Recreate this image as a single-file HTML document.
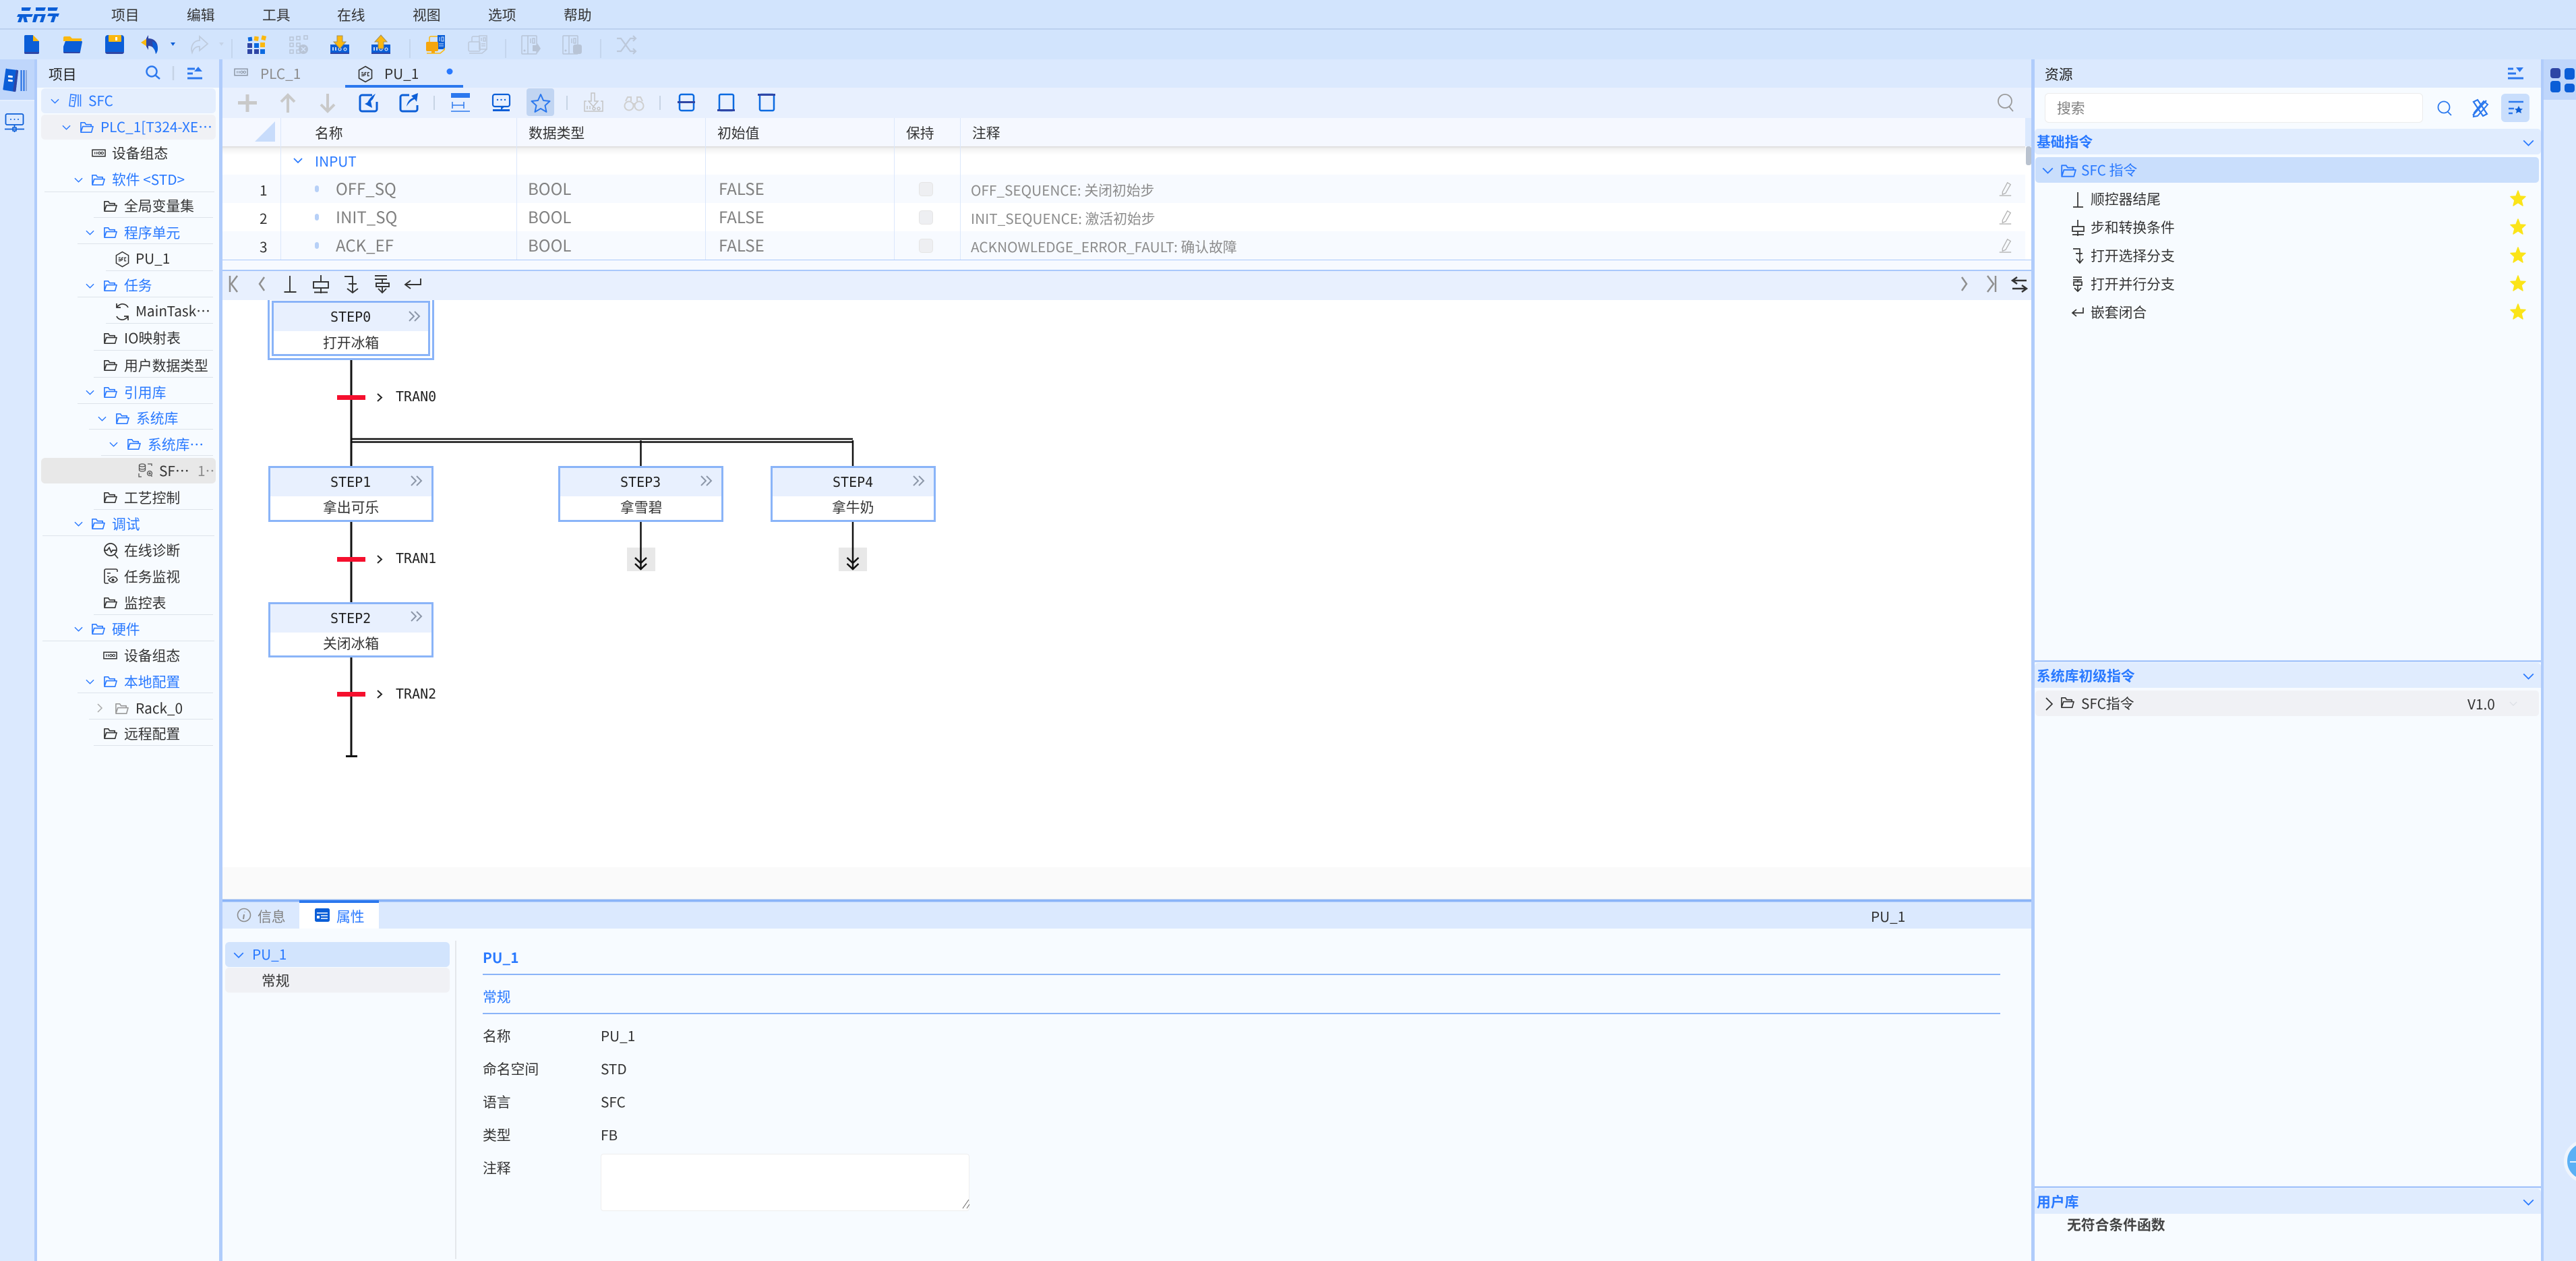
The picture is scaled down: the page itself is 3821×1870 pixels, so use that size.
<!DOCTYPE html>
<html lang="zh"><head><meta charset="utf-8"><title>SFC</title>
<style>
html,body{margin:0;padding:0;width:3821px;height:1870px;overflow:hidden;background:#dbe9fe}
body{position:relative;font-family:"Noto Sans CJK SC","Liberation Sans",sans-serif;font-size:20.8px;color:#333}
.b{position:absolute}
.t{position:absolute;white-space:nowrap;line-height:30px;height:30px;margin-top:-1px}
.bl{color:#2979ff}.g{color:#808080}.lg{color:#8c8c8c}.d{color:#333}
.h{font-weight:700;color:#2979ff}
.v{font-size:24px}
.m{font-family:"DejaVu Sans Mono","Liberation Mono",monospace;font-size:20px;color:#222}
svg.o{position:absolute;left:0;top:0}
</style></head><body>
<!-- backgrounds -->
<div class="b" style="left:0;top:0;width:3821px;height:88px;background:#d2e4fd"></div>
<div class="b" style="left:0;top:42px;width:3821px;height:2px;background:#bcd1ef"></div>
<div class="b" style="left:0;top:88px;width:52px;height:60px;background:#bfd6fb"></div>
<div class="b" style="left:0;top:148px;width:52px;height:2px;background:#e4eefe"></div>
<div class="b" style="left:51px;top:88px;width:4px;height:1782px;background:#b0ccfb"></div>
<div class="b" style="left:55px;top:130px;width:270px;height:1740px;background:#f7fbff"></div>
<div class="b" style="left:325px;top:88px;width:5px;height:1782px;background:#b0ccfb"></div>
<div class="b" style="left:61px;top:131px;width:259px;height:37px;background:#e4eefd;border-radius:6px"></div>
<div class="b" style="left:61px;top:170px;width:259px;height:37px;background:#f0f1f5;border-radius:6px"></div>
<div class="b" style="left:61px;top:679px;width:259px;height:38px;background:#e8e8e8;border-radius:6px"></div>
<!-- center -->
<div class="b" style="left:330px;top:130px;width:2683px;height:45px;background:#e8f0fe"></div>
<div class="b" style="left:330px;top:175px;width:2674px;height:42px;background:#f5f8ff"></div>
<div class="b" style="left:330px;top:217px;width:2683px;height:168px;background:#fff"></div>
<div class="b" style="left:330px;top:217px;width:2674px;height:13px;background:linear-gradient(#dadada,#f2f2f2 25%,#fff)"></div>
<div class="b" style="left:330px;top:259px;width:2674px;height:42px;background:#f7faff"></div>
<div class="b" style="left:330px;top:343px;width:2674px;height:42px;background:#f7faff"></div>
<div class="b" style="left:330px;top:385px;width:2683px;height:15px;background:#f7faff;border-top:1px solid #a9c8fb;box-sizing:border-box"></div>
<div class="b" style="left:330px;top:400px;width:2683px;height:45px;background:#e8f0fe;border-top:2px solid #a9c8fb;box-sizing:border-box"></div>
<div class="b" style="left:330px;top:445px;width:2683px;height:841px;background:#fff"></div>
<div class="b" style="left:330px;top:1286px;width:2683px;height:47px;background:#fafafa"></div>
<div class="b" style="left:416px;top:175px;width:1px;height:210px;background:#dbe7fb"></div>
<div class="b" style="left:766px;top:175px;width:1px;height:210px;background:#dbe7fb"></div>
<div class="b" style="left:1046px;top:175px;width:1px;height:210px;background:#dbe7fb"></div>
<div class="b" style="left:1326px;top:175px;width:1px;height:210px;background:#dbe7fb"></div>
<div class="b" style="left:1424px;top:175px;width:1px;height:210px;background:#dbe7fb"></div>
<div class="b" style="left:3005px;top:217px;width:8px;height:28px;background:#b9c2cf;border-radius:3px"></div>
<div class="b" style="left:3013px;top:88px;width:5px;height:1782px;background:#b0ccfb"></div>
<!-- bottom panel -->
<div class="b" style="left:330px;top:1333px;width:2683px;height:5px;background:#8ab4f8;border-top:1px solid #cbd9f0;border-bottom:1px solid #b4cffb;box-sizing:border-box"></div>
<div class="b" style="left:330px;top:1338px;width:2683px;height:39px;background:#dbe9fe"></div>
<div class="b" style="left:330px;top:1377px;width:2683px;height:493px;background:#f7fbff"></div>
<div class="b" style="left:444px;top:1335px;width:118px;height:42px;background:#fff"></div>
<div class="b" style="left:444px;top:1335px;width:118px;height:4px;background:#2b78ee"></div>
<div class="b" style="left:334px;top:1397px;width:333px;height:37px;background:#d2e4fd;border-radius:6px"></div>
<div class="b" style="left:334px;top:1435px;width:333px;height:37px;background:#f0f1f5;border-radius:6px"></div>
<div class="b" style="left:675px;top:1395px;width:2px;height:472px;background:#e4e7eb"></div>
<div class="b" style="left:716px;top:1444px;width:2251px;height:2px;background:#8ab4f8"></div>
<div class="b" style="left:716px;top:1502px;width:2251px;height:2px;background:#8ab4f8"></div>
<div class="b" style="left:891px;top:1711px;width:547px;height:85px;background:#fff;border:1px solid #eeeeee;border-radius:4px;box-sizing:border-box"></div>
<!-- right panel -->
<div class="b" style="left:3018px;top:130px;width:751px;height:1740px;background:#f7fbff"></div>
<div class="b" style="left:3769px;top:88px;width:4px;height:1782px;background:#b0ccfb"></div>
<div class="b" style="left:3773px;top:88px;width:48px;height:60px;background:#bfd6fb"></div>
<div class="b" style="left:3033px;top:138px;width:561px;height:44px;background:#fff;border:1px solid #ececec;border-radius:6px;box-sizing:border-box"></div>
<div class="b" style="left:3710px;top:139px;width:42px;height:42px;background:#c9defc;border-radius:6px"></div>
<div class="b" style="left:3018px;top:191px;width:751px;height:38px;background:#e0ecfe;border-radius:5px"></div>
<div class="b" style="left:3019px;top:233px;width:747px;height:38px;background:#c9defc;border-radius:5px"></div>
<div class="b" style="left:3018px;top:979px;width:751px;height:3px;background:#b0ccfb"></div>
<div class="b" style="left:3018px;top:983px;width:751px;height:37px;background:#e0ecfe;border-radius:5px 5px 0 0"></div>
<div class="b" style="left:3019px;top:1024px;width:747px;height:38px;background:#f0f1f5;border-radius:5px"></div>
<div class="b" style="left:3018px;top:1759px;width:751px;height:3px;background:#b0ccfb"></div>
<div class="b" style="left:3018px;top:1763px;width:751px;height:37px;background:#e0ecfe;border-radius:5px 5px 0 0"></div>
<div class="b" style="left:3803px;top:1690px;width:64px;height:64px;border-radius:50%;background:#5ab0f5;border:5px solid #eef4fc;box-sizing:border-box"></div>
<div class="b" style="left:3812px;top:1722px;width:9px;height:2px;background:#e8f4ff"></div>
<!-- tree lines -->
<div class="b" style="left:66px;top:284px;width:252px;height:1px;background:#dde3ea"></div>
<div class="b" style="left:139px;top:322px;width:177px;height:1px;background:#dde3ea"></div>
<div class="b" style="left:115px;top:361px;width:201px;height:1px;background:#dde3ea"></div>
<div class="b" style="left:157px;top:401px;width:159px;height:1px;background:#dde3ea"></div>
<div class="b" style="left:115px;top:440px;width:201px;height:1px;background:#dde3ea"></div>
<div class="b" style="left:157px;top:479px;width:159px;height:1px;background:#dde3ea"></div>
<div class="b" style="left:139px;top:519px;width:177px;height:1px;background:#dde3ea"></div>
<div class="b" style="left:139px;top:559px;width:177px;height:1px;background:#dde3ea"></div>
<div class="b" style="left:115px;top:598px;width:201px;height:1px;background:#dde3ea"></div>
<div class="b" style="left:132px;top:636px;width:184px;height:1px;background:#dde3ea"></div>
<div class="b" style="left:150px;top:675px;width:166px;height:1px;background:#dde3ea"></div>
<div class="b" style="left:139px;top:755px;width:177px;height:1px;background:#dde3ea"></div>
<div class="b" style="left:63px;top:794px;width:255px;height:1px;background:#dde3ea"></div>
<div class="b" style="left:139px;top:911px;width:177px;height:1px;background:#dde3ea"></div>
<div class="b" style="left:63px;top:950px;width:255px;height:1px;background:#dde3ea"></div>
<div class="b" style="left:115px;top:1027px;width:201px;height:1px;background:#dde3ea"></div>
<div class="b" style="left:132px;top:1066px;width:184px;height:1px;background:#dde3ea"></div>
<div class="b" style="left:139px;top:1105px;width:177px;height:1px;background:#dde3ea"></div>
<!-- SFC step boxes -->
<div class="b" style="left:397px;top:445px;width:247px;height:89px;border:3px solid #8ab4f8;border-top:0;box-sizing:border-box;background:#fff"></div>
<div class="b" style="left:403px;top:446px;width:235px;height:82px;border:3px solid #8ab4f8;box-sizing:border-box;background:linear-gradient(#e8f0fe 0,#e8f0fe 42px,#fff 42px)"></div>
<div class="b" style="left:398px;top:691px;width:245px;height:83px;border:3px solid #8ab4f8;box-sizing:border-box;background:linear-gradient(#e8f0fe 0,#e8f0fe 42px,#fff 42px)"></div>
<div class="b" style="left:398px;top:893px;width:245px;height:82px;border:3px solid #8ab4f8;box-sizing:border-box;background:linear-gradient(#e8f0fe 0,#e8f0fe 42px,#fff 42px)"></div>
<div class="b" style="left:828px;top:691px;width:245px;height:83px;border:3px solid #8ab4f8;box-sizing:border-box;background:linear-gradient(#e8f0fe 0,#e8f0fe 42px,#fff 42px)"></div>
<div class="b" style="left:1143px;top:691px;width:245px;height:83px;border:3px solid #8ab4f8;box-sizing:border-box;background:linear-gradient(#e8f0fe 0,#e8f0fe 42px,#fff 42px)"></div>
<div class="b" style="left:930px;top:812px;width:42px;height:35px;background:#e8e8e8"></div>
<div class="b" style="left:1244px;top:812px;width:42px;height:35px;background:#e8e8e8"></div>

<!-- icons -->
<svg class="o" width="3821" height="1870" viewBox="0 0 3821 1870" fill="none">
<defs>
<symbol id="fo" viewBox="0 0 22 22"><path d="M2 18V4h6l2 3h8v3M2 19l3-9h16l-2.5 9z" stroke="currentColor" stroke-width="1.7" stroke-linejoin="round" fill="none"/></symbol>
<symbol id="cd" viewBox="0 0 14 8"><path d="M1 1l6 6 6-6" stroke="currentColor" stroke-width="1.5" fill="none"/></symbol>
<symbol id="io" viewBox="0 0 22 14"><rect x="1" y="2" width="20" height="10" stroke="currentColor" stroke-width="1.6" fill="none"/><path d="M5 5v4M8 5v4" stroke="currentColor" stroke-width="1.3"/><circle cx="12" cy="7" r="1.8" stroke="currentColor" stroke-width="1.2" fill="none"/><circle cx="16.5" cy="7" r="1.8" stroke="currentColor" stroke-width="1.2" fill="none"/></symbol>
<symbol id="sf" viewBox="0 0 22 26"><path d="M11 1.5l9.500 5.500v12l-9.500 5.500-9.500-5.500v-12z" stroke="currentColor" stroke-width="1.600" fill="none"/><path d="M5 10.500h3M5 13h3v2.500H5M10 10.500v5M10 10.500h2.500M10 13h2M17 10.500h-2.500v5H17" stroke="currentColor" stroke-width="1.300" fill="none"/></symbol>
<symbol id="st" viewBox="0 0 24 24"><path d="M12 1l3 8 8 .5-6 5.500 2 8-7-4.500L5 23l2-8-6-5.500L9 9z" fill="#fbe418" stroke="#fbe418" stroke-width="1.500" stroke-linejoin="round"/></symbol>
<symbol id="pe" viewBox="0 0 24 24"><path d="M8 17L16 2l5 3-8 14-5 2zM3 23h19" stroke="#b4b4b4" stroke-width="1.500" fill="none"/></symbol>
<symbol id="dd" viewBox="0 0 20 16"><path d="M1 1l7 7-7 7M9 1l7 7-7 7" stroke="#8c97a8" stroke-width="2" fill="none"/></symbol>
</defs>
<!-- logo -->
<path d="M32 11h14l-2 5H32zM27 21h22l-2 4h-8l2 8h-5l-2-8-3 8h-5l3-8h-4zM53 11h15l-2 5H53zM51 21h17l-1 3-3 9h-5l3-9h-6l-3 9h-5zM71 11h15l-2 5H71zM72 20h16l-2 5-3-1-3 9h-5l3-9h-8z" fill="#0b5ed7"/>
<!-- toolbar 1 -->
<path d="M36 54a2 2 0 0 1 2-2h11v9h9v17a2 2 0 0 1-2 2H38a2 2 0 0 1-2-2z" fill="#0b5ed7"/><path d="M49 52l9 9h-9z" fill="#fbb80f"/><path d="M36 77v1a2 2 0 0 0 2 2h18a2 2 0 0 0 2-2v-1z" fill="#2f46a5"/>
<path d="M94 56a2 2 0 0 1 2-2h8l3 3h14v4H94z" fill="#fbb80f"/><path d="M97 61h24a1 1 0 0 1 1 1l-3 15a2 2 0 0 1-2 2H96a2 2 0 0 1-2-2v-8z" fill="#0b5ed7"/><path d="M94 77a2 2 0 0 0 2 2h21a2 2 0 0 0 2-2z" fill="#2f46a5"/>
<rect x="156" y="52" width="28" height="28" rx="4" fill="#0b5ed7"/><rect x="161" y="52" width="19" height="10" rx="1" fill="#fbb80f"/><rect x="171" y="55" width="3" height="5" fill="#fff"/><path d="M156 77a3 3 0 0 0 3 3h22a3 3 0 0 0 3-3z" fill="#2f46a5"/>
<path d="M218 57l-9 6 9 6z" fill="#fbb80f"/><path d="M220 52l-3 5v12l3 5v-6c6 0 10 4 11 12 2-2 3-6 3-9 0-9-6-14-14-14z" fill="#2f46a5"/><path d="M226 61c5 2 8 6 8 11 0 3-1 6-3 8-.5-4-2-7-4-9z" fill="#0b5ed7"/>
<path d="M253 63h7l-3.500 5z" fill="#0b5ed7"/>
<path d="M296 54l12 11-12 10v-6c-6 0-9 3-11 9-3-9 2-18 11-18z" stroke="#bfcbdd" stroke-width="1.800"/><path d="M325 63h7l-3.500 5z" fill="#c5d3e8"/>
<path d="M344 58v28M608 58v28M750 58v28M891 58v28" stroke="#bfd0e8" stroke-width="1.500"/>
<rect x="368" y="55" width="6" height="6" fill="#0b6ae0" transform="rotate(-8 371 58)"/><rect x="377" y="54" width="6.500" height="6.500" fill="#fbb80f" transform="rotate(8 380 57)"/><rect x="388" y="53" width="6.500" height="6.500" fill="#fbb80f" transform="rotate(14 391 56)"/>
<rect x="367" y="64" width="7" height="7" fill="#2f46a5"/><rect x="377" y="64" width="7" height="7" fill="#0b6ae0"/><rect x="386" y="63" width="7" height="7" fill="#fbb80f"/><rect x="367" y="73" width="7" height="7" fill="#2f46a5"/><rect x="377" y="73" width="7" height="7" fill="#2f46a5"/><rect x="386" y="73" width="7" height="7" fill="#0b6ae0"/>
<g stroke="#b8c4d6" stroke-width="1.500"><rect x="430" y="55" width="5" height="5"/><rect x="440" y="54" width="5" height="5"/><rect x="451" y="53" width="5" height="5"/><rect x="430" y="64" width="5" height="5"/><rect x="440" y="64" width="5" height="5"/><rect x="430" y="74" width="5" height="5"/><rect x="440" y="74" width="5" height="5"/></g><circle cx="450" cy="73" r="7" fill="#b8c4d6"/><path d="M447 70l6 6m0-6l-6 6" stroke="#d2e4fd" stroke-width="1.500"/>
<rect x="490" y="66" width="28" height="14" fill="#0b5ed7"/><rect x="490" y="78" width="28" height="2" fill="#2f46a5"/><path d="M494 70v5M498 70v5" stroke="#fff" stroke-width="1.500"/><circle cx="504" cy="73" r="2" stroke="#fff"/><circle cx="512" cy="73" r="2" stroke="#fff"/>
<path d="M500 53h8v9h5l-9 10-9-10h5z" fill="#fbb80f" stroke="#a08f5c"/>
<rect x="551" y="66" width="28" height="14" fill="#0b5ed7"/><rect x="551" y="78" width="28" height="2" fill="#2f46a5"/><path d="M555 70v5M559 70v5" stroke="#fff" stroke-width="1.500"/><circle cx="565" cy="73" r="2" stroke="#fff"/><circle cx="573" cy="73" r="2" stroke="#fff"/>
<path d="M561 72h8v-10h5l-9-10-9 10h5z" fill="#fbb80f" stroke="#a08f5c"/>
<rect x="649" y="52" width="11" height="21" fill="#0b5ed7"/><path d="M652 55v6M655 55h3v6h-3zM651 65h7M651 68h7" stroke="#cfe0fb" stroke-width="1"/><path d="M637 62v-6a2 2 0 0 1 2-2h10" stroke="#fbb80f" stroke-width="1.500"/><rect x="632" y="62" width="18" height="14" rx="2" fill="#f6a60d"/><rect x="640" y="76" width="5" height="3" fill="#f6a60d"/><path d="M633 79h20l6-5v-3" stroke="#fbb80f" stroke-width="1.500"/>
<g stroke="#bcc8da" stroke-width="1.500"><rect x="711" y="53" width="11" height="20"/><path d="M700 62v-6a2 2 0 0 1 2-2h9"/><rect x="695" y="62" width="17" height="14" rx="2"/><path d="M696 79h19l6-5v-2"/><path d="M714 56v5M717 56h3v5h-3zM714 65h6M714 68h6"/></g>
<g stroke="#b8c4d6" stroke-width="1.500"><rect x="774" y="53" width="22" height="27" rx="1"/><path d="M783 53v27M787 57v7M790 57h3v7h-3z"/></g><path d="M790 67h7v-3l5 8-5 7v-3h-7z" fill="#b8c4d6"/><circle cx="778" cy="75" r="1.500" fill="#b8c4d6"/>
<g stroke="#b8c4d6" stroke-width="1.500"><rect x="835" y="53" width="22" height="27" rx="1"/><path d="M844 53v27M848 57v7M851 57h3v7h-3z"/></g><rect x="850" y="66" width="13" height="14" rx="3" fill="#b8c4d6"/><circle cx="839" cy="75" r="1.500" fill="#b8c4d6"/>
<path d="M915 57h6l14 19h8M915 76h6l14-19h8M939 53l4 4-4 4M939 72l4 4-4 4" stroke="#bcc8da" stroke-width="2.200"/>
<!-- rail icons -->
<path d="M10 102l16 2a1.500 1.500 0 0 1 1 2l-3.500 29a1.500 1.500 0 0 1-2 1l-16-2.500a1.500 1.500 0 0 1-1-2l4-29a1.500 1.500 0 0 1 1.500-1z" fill="#0b5ed7"/><path d="M24 103.500l2 .5a1.500 1.500 0 0 1 1 2l-3.500 29a1.500 1.500 0 0 1-2 1l-2.500-.5z" fill="#2f46a5"/><rect x="12" y="112" width="7" height="3" rx="1" fill="#fff" transform="rotate(6 15 113)"/><rect x="12" y="118" width="7" height="3" rx="1" fill="#fff" transform="rotate(6 15 119)"/>
<path d="M31.500 104v31M35.500 104v31" stroke="#1e6be0" stroke-width="2"/><path d="M39 104v31" stroke="#8aa8dc" stroke-width="2"/>
<rect x="8.500" y="169" width="26" height="16" rx="2" stroke="#0b5ed7" stroke-width="1.800"/><circle cx="16" cy="177" r="1" fill="#0b5ed7"/><circle cx="21.500" cy="177" r="1" fill="#0b5ed7"/><circle cx="27" cy="177" r="1" fill="#0b5ed7"/><path d="M21.500 185v4M7 191.500h29M21.500 194v2" stroke="#0b5ed7" stroke-width="1.800"/><rect x="19" y="189" width="5" height="5" stroke="#0b5ed7" stroke-width="1.500"/>
<!-- left panel header -->
<circle cx="225" cy="106" r="7.500" stroke="#2b78ee" stroke-width="2.500"/><path d="M231 112l6 5" stroke="#2b78ee" stroke-width="2.500"/><path d="M257 98v21" stroke="#c6d3e6" stroke-width="2.500"/>
<path d="M278 102h11M278 109h8M278 116h22" stroke="#2b78ee" stroke-width="3"/><path d="M288 106l6-7 6 7z" fill="#2b78ee"/>
<!-- tree icons -->
<g style="color:#2979ff">
<use href="#cd" x="75" y="146" width="13" height="8"/><path d="M105 140l8 1-3 17-7-1zM106.500 145h4M106 149h4M116 140v18M119.500 140v18" stroke="#2979ff" stroke-width="1.500"/>
<use href="#cd" x="92" y="185" width="13" height="8"/><use href="#fo" x="118" y="178" width="21" height="21"/>
<use href="#cd" x="110" y="263" width="13" height="8"/><use href="#fo" x="135" y="256" width="21" height="21"/>
<use href="#cd" x="127" y="341" width="13" height="8"/><use href="#fo" x="153" y="334" width="21" height="21"/>
<use href="#cd" x="127" y="420" width="13" height="8"/><use href="#fo" x="153" y="413" width="21" height="21"/>
<use href="#cd" x="127" y="578" width="13" height="8"/><use href="#fo" x="153" y="571" width="21" height="21"/>
<use href="#cd" x="145" y="617" width="13" height="8"/><use href="#fo" x="171" y="610" width="21" height="21"/>
<use href="#cd" x="162" y="655" width="13" height="8"/><use href="#fo" x="188" y="648" width="21" height="21"/>
<use href="#cd" x="110" y="773" width="13" height="8"/><use href="#fo" x="135" y="766" width="21" height="21"/>
<use href="#cd" x="110" y="929" width="13" height="8"/><use href="#fo" x="135" y="922" width="21" height="21"/>
<use href="#cd" x="127" y="1007" width="13" height="8"/><use href="#fo" x="153" y="1000" width="21" height="21"/>
</g>
<g style="color:#333">
<use href="#io" x="136" y="220" width="21" height="14"/>
<use href="#fo" x="153" y="295" width="21" height="21"/>
<use href="#sf" x="171" y="372" width="21" height="25"/>
<path d="M190 456a9 9 0 0 0-14-3l-3 2m0 14a9 9 0 0 0 14 3l3-2M173 450v6h6M190 475v-6h-6" stroke="#333" stroke-width="1.700"/>
<use href="#fo" x="153" y="491" width="21" height="21"/>
<use href="#fo" x="153" y="531" width="21" height="21"/>
<use href="#fo" x="153" y="727" width="21" height="21"/>
<circle cx="164" cy="815" r="9" stroke="#333" stroke-width="1.700"/><path d="M154 816h5l3-4 3 7 2-3h6M170 822l5 6" stroke="#333" stroke-width="1.700"/>
<path d="M174 848v-2a2 2 0 0 0-2-2h-15a2 2 0 0 0-2 2v17a2 2 0 0 0 2 2h4M159 850h5M159 855h3" stroke="#333" stroke-width="1.600"/><path d="M161 860c5-6 11-6 13 0-3 5-9 5-13 0z" stroke="#333" stroke-width="1.600"/><circle cx="167.500" cy="860" r="2" fill="#333"/>
<use href="#fo" x="153" y="883" width="21" height="21"/>
<use href="#io" x="153" y="965" width="21" height="14"/>
<use href="#fo" x="153" y="1077" width="21" height="21"/>
</g>
<path d="M145 1044l6 6-6 6" stroke="#aaa" stroke-width="1.500"/><use href="#fo" x="170" y="1040" width="21" height="21" style="color:#999"/>
<g stroke="#555" stroke-width="1.300"><ellipse cx="211" cy="690" rx="4.500" ry="2"/><path d="M206.500 690v7a4.500 2 0 0 0 9 0v-7M206.500 694a4.500 2 0 0 0 9 0M219 688h6v3M206 702v5h4M225 705v2"/><circle cx="222" cy="702" r="3.500"/><circle cx="222" cy="702" r="1"/></g>
<!-- tabs -->
<use href="#io" x="347" y="100" width="21" height="14" style="color:#8f9aa8"/>
<use href="#sf" x="531" y="97" width="22" height="26" style="color:#333"/>
<circle cx="667" cy="106" r="4.500" fill="#2979ff"/><rect x="512" y="126" width="175" height="4" fill="#2b78ee"/>
<!-- toolbar 2 -->
<path d="M367 140v26M353 152.500h28" stroke="#c9c9c9" stroke-width="5"/>
<path d="M427 167v-25M417 151l10-10 10 10" stroke="#c9c9c9" stroke-width="4"/>
<path d="M486 139v25M476 155l10 10 10-10" stroke="#c9c9c9" stroke-width="4"/>
<path d="M552 141h-15a3 3 0 0 0-3 3v18a3 3 0 0 0 3 3h19a3 3 0 0 0 3-3v-11" stroke="#0b5ed7" stroke-width="3"/><path d="M557 139l-4 8-3 3 2 10-11-6 4-2c3-6 7-10 12-13z" fill="#0b5ed7"/>
<path d="M607 141h-10a3 3 0 0 0-3 3v18a3 3 0 0 0 3 3h19a3 3 0 0 0 3-3v-6" stroke="#0b5ed7" stroke-width="3"/><path d="M603 158c1-6 4-11 10-13l-3-3 10-4-2 13-3-4c-5 2-9 6-12 11z" fill="#0b5ed7"/>
<path d="M644 142v21M841 142v21M979 142v21" stroke="#bccbdc" stroke-width="1.500"/>
<rect x="669" y="138" width="28" height="7" fill="#2b78ee"/><path d="M671 151v10M688 151v10M671 156h17M669 165h28" stroke="#2b78ee" stroke-width="1.500"/>
<rect x="731" y="140" width="25" height="18" rx="3" stroke="#0b5ed7" stroke-width="2.200"/><circle cx="738" cy="148" r="1.200" fill="#0b5ed7"/><circle cx="743.500" cy="148" r="1.200" fill="#0b5ed7"/><circle cx="749" cy="148" r="1.200" fill="#0b5ed7"/><path d="M744 158v3l3-3" stroke="#0b5ed7" stroke-width="2"/><rect x="731" y="162" width="25" height="3" fill="#0b5ed7"/>
<rect x="781" y="131" width="41" height="41" rx="4" fill="#c1d5f2"/><path d="M802 140l4 9 9.500 1-7 6.500 2 9.500-8.500-5-8.500 5 2-9.500-7-6.500 9.500-1z" stroke="#2b78ee" stroke-width="2" stroke-linejoin="round"/>
<g stroke="#c4c4c4" stroke-width="1.500"><path d="M877 138h5v12h5l-7 8-7-8h4zM870 150h-3v15h27v-15h-3"/><path d="M871 157v5M875 157v5M881 159a2 2 0 1 0 .01 0M888 159a2 2 0 1 0 .01 0"/></g>
<g stroke="#cfcfcf" stroke-width="2"><circle cx="933" cy="157" r="6.500"/><circle cx="948" cy="157" r="6.500"/><path d="M939 154h3M928 150l3-6h5v6M953 150l-3-6h-5v6"/></g>
<rect x="1008" y="140" width="21" height="24" rx="3" stroke="#0b6ae0" stroke-width="2.500"/><rect x="1005" y="150" width="26" height="3" fill="#2f46a5"/>
<rect x="1067" y="140" width="21" height="24" rx="2" stroke="#0b6ae0" stroke-width="2.500"/><rect x="1064" y="162" width="26" height="3" fill="#2f46a5"/>
<rect x="1127" y="140" width="21" height="24" rx="2" stroke="#0b6ae0" stroke-width="2.500"/><rect x="1124" y="139" width="26" height="3" fill="#2f46a5"/>
<circle cx="2974" cy="150" r="10" stroke="#9a9a9a" stroke-width="1.800"/><path d="M2980 158l6 7" stroke="#9a9a9a" stroke-width="1.800"/>
<!-- table -->
<path d="M378 210l30-30v30z" fill="#c8dcfb"/>
<path d="M436 235l6 6 6-6" stroke="#2979ff" stroke-width="1.800"/>
<rect x="467" y="275" width="6" height="10" rx="3" fill="#b7d0f7"/><rect x="467" y="317" width="6" height="10" rx="3" fill="#b7d0f7"/><rect x="467" y="359" width="6" height="10" rx="3" fill="#b7d0f7"/>
<rect x="1363.500" y="270.500" width="20" height="20" rx="4" fill="#eeeff2" stroke="#e5e5e5"/><rect x="1363.500" y="312.500" width="20" height="20" rx="4" fill="#eeeff2" stroke="#e5e5e5"/><rect x="1363.500" y="354.500" width="20" height="20" rx="4" fill="#eeeff2" stroke="#e5e5e5"/>
<use href="#pe" x="2963" y="269" width="22" height="22"/><use href="#pe" x="2963" y="311" width="22" height="22"/><use href="#pe" x="2963" y="353" width="22" height="22"/>
<!-- nav strip -->
<path d="M341 409v24M352 409l-9 12 9 12" stroke="#8f8f8f" stroke-width="2.500"/><path d="M392 411l-7 10 7 10" stroke="#8f8f8f" stroke-width="2.500"/>
<g stroke="#333" stroke-width="1.900"><path d="M430 409v24M421.500 433h18M476 408v10M465 418h22v9h-22zM476 427v8M466 433.500h20"/>
<path d="M511 410h12v24M515 428l8 6 8-6M517 421h12"/><path d="M556 409h18M556 414h18M567 414v6M558 420h19v5h-19zM567 425v9M561 428l6 6 6-6"/><path d="M624 413v9h-23M609 416l-8 6 8 6"/>
<path d="M2910 411l7 10-7 10" stroke="#8f8f8f" stroke-width="2.500"/><path d="M2960 409v24M2948 409l9 12-9 12" stroke="#8f8f8f" stroke-width="2.500"/>
<path d="M3006 416h-20M2992 411l-7 5 7 5M2985 428h20M2999 423l7 5-7 5" stroke-width="2.500"/></g>
<!-- SFC lines -->
<g stroke="#111" stroke-width="3">
<path d="M521 534v157M521 774v119M521 975v147"/>
<path d="M513 1121.500h17" stroke-width="3"/>
<path d="M521 651h744M521 655.500h744" stroke-width="2.500"/>
<path d="M950.500 653v38M950.500 774v71M1265 653v38M1265 774v71" stroke-width="2.500"/>
<path d="M942 827l8.500 8 8.500-8M942 836l8.500 8 8.500-8M1256.500 827l8.500 8 8.500-8M1256.500 836l8.500 8 8.500-8" stroke-width="2.500"/>
</g>
<rect x="500" y="586" width="42" height="7" fill="#f5102e"/><rect x="500" y="826" width="42" height="7" fill="#f5102e"/><rect x="500" y="1026" width="42" height="7" fill="#f5102e"/>
<path d="M560 584l6 5.500-6 5.500M560 824l6 5.500-6 5.500M560 1024l6 5.500-6 5.500" stroke="#222" stroke-width="2"/>
<use href="#dd" x="606" y="461" width="20" height="16"/><use href="#dd" x="609" y="705" width="20" height="16"/><use href="#dd" x="609" y="906" width="20" height="16"/><use href="#dd" x="1039" y="705" width="20" height="16"/><use href="#dd" x="1354" y="705" width="20" height="16"/>
<!-- bottom -->
<circle cx="362" cy="1357" r="9.500" stroke="#8c8c8c" stroke-width="1.600"/><path d="M363 1352v.5M362 1356l-1 7" stroke="#8c8c8c" stroke-width="2"/>
<rect x="467" y="1347" width="22" height="20" rx="2.500" fill="#0b5ed7"/><path d="M470 1354h16M476 1358h10M476 1362h10" stroke="#fff" stroke-width="1.600"/><rect x="470" y="1358" width="4" height="4" fill="#fff"/>
<use href="#cd" x="346" y="1412" width="16" height="9" style="color:#2979ff"/>
<path d="M1428 1792l9-13M1434 1792l4-6" stroke="#666" stroke-width="1"/>
<!-- right panel icons -->
<path d="M3720 102h8M3720 109h12M3720 116h23" stroke="#2b78ee" stroke-width="3"/><path d="M3732 100h11l-5.500 7z" fill="#2b78ee"/>
<rect x="3783" y="101" width="15" height="15" rx="4" fill="#2f46a5"/><rect x="3804" y="101" width="15" height="17" rx="4" fill="#0b5ed7"/><rect x="3783" y="120" width="15" height="17" rx="4" fill="#0b5ed7"/><rect x="3804" y="124" width="15" height="13" rx="4" fill="#0b5ed7"/>
<circle cx="3625" cy="159" r="8.500" stroke="#2b78ee" stroke-width="1.800"/><path d="M3631 166l5 5" stroke="#2b78ee" stroke-width="1.800"/>
<path d="M3669 151l14 21 6-3-14-21zM3688 149l-20 22" stroke="#2b78ee" stroke-width="2.200"/><path d="M3684 150l6 5-15 17-6 1 1-6z" stroke="#2b78ee" stroke-width="2"/>
<path d="M3721 151h22M3721 161h8M3721 168h6" stroke="#2b78ee" stroke-width="2.500"/><path d="M3736 157l2 4 4 .5-3 2.500 1 4-4-2-4 2 1-4-3-2.500 4-.5z" fill="#0b5ed7"/>
<use href="#cd" x="3742" y="207" width="17" height="10" style="color:#2979ff"/><use href="#cd" x="3742" y="998" width="17" height="10" style="color:#2979ff"/><use href="#cd" x="3742" y="1778" width="17" height="10" style="color:#2979ff"/>
<use href="#cd" x="3029" y="248" width="17" height="10" style="color:#2979ff"/><use href="#fo" x="3056" y="241" width="24" height="24" style="color:#2979ff"/>
<path d="M3035 1035l9 9-9 9" stroke="#333" stroke-width="1.700"/><use href="#fo" x="3056" y="1031" width="21" height="21" style="color:#333"/><use href="#cd" x="3722" y="1040" width="12" height="7" style="color:#dcdfe5"/>
<g stroke="#333" stroke-width="1.700"><path d="M3082 285v22M3075 307h15"/>
<path d="M3082 326v10M3074 336h17v7h-17zM3082 343v7M3074 348h17"/>
<path d="M3075 369h10v20M3080 384l5 6 5-6M3079 376h10"/>
<path d="M3075 411h13M3075 415h13M3082 415v3M3076 418h12v5h-12zM3082 423v8M3077 427l5 5 5-5"/>
<path d="M3090 456v8h-16M3080 459l-6 5 6 5"/></g>
<use href="#st" x="3723" y="282" width="24" height="24"/><use href="#st" x="3723" y="324" width="24" height="24"/><use href="#st" x="3723" y="366" width="24" height="24"/><use href="#st" x="3723" y="408" width="24" height="24"/><use href="#st" x="3723" y="450" width="24" height="24"/>
</svg>

<!-- menu -->
<div class="t d" style="left:165px;top:7px">项目</div>
<div class="t d" style="left:277px;top:7px">编辑</div>
<div class="t d" style="left:389px;top:7px">工具</div>
<div class="t d" style="left:500px;top:7px">在线</div>
<div class="t d" style="left:612px;top:7px">视图</div>
<div class="t d" style="left:724px;top:7px">选项</div>
<div class="t d" style="left:836px;top:7px">帮助</div>
<!-- tree -->
<div class="t" style="left:72px;top:95px;color:#222">项目</div>
<div class="t bl" style="left:131px;top:134px">SFC</div>
<div class="t bl" style="left:149px;top:173px">PLC_1[T324-XE…</div>
<div class="t d" style="left:166px;top:212px">设备组态</div>
<div class="t bl" style="left:166px;top:251px">软件 &lt;STD&gt;</div>
<div class="t d" style="left:184px;top:290px">全局变量集</div>
<div class="t bl" style="left:184px;top:330px">程序单元</div>
<div class="t d" style="left:201px;top:368px">PU_1</div>
<div class="t bl" style="left:184px;top:408px">任务</div>
<div class="t d" style="left:201px;top:446px">MainTask…</div>
<div class="t d" style="left:184px;top:486px">IO映射表</div>
<div class="t d" style="left:184px;top:527px">用户数据类型</div>
<div class="t bl" style="left:184px;top:567px">引用库</div>
<div class="t bl" style="left:202px;top:605px">系统库</div>
<div class="t bl" style="left:219px;top:644px">系统库…</div>
<div class="t d" style="left:236px;top:683px">SF…</div>
<div class="t lg" style="left:293px;top:683px;width:25px;overflow:hidden">1…</div>
<div class="t d" style="left:184px;top:723px">工艺控制</div>
<div class="t bl" style="left:166px;top:762px">调试</div>
<div class="t d" style="left:184px;top:801px">在线诊断</div>
<div class="t d" style="left:184px;top:840px">任务监视</div>
<div class="t d" style="left:184px;top:879px">监控表</div>
<div class="t bl" style="left:166px;top:918px">硬件</div>
<div class="t d" style="left:184px;top:957px">设备组态</div>
<div class="t bl" style="left:184px;top:996px">本地配置</div>
<div class="t d" style="left:201px;top:1035px">Rack_0</div>
<div class="t d" style="left:184px;top:1073px">远程配置</div>
<!-- tabs -->
<div class="t lg" style="left:386px;top:94px">PLC_1</div>
<div class="t d" style="left:570px;top:94px">PU_1</div>
<!-- table -->
<div class="t d" style="left:467px;top:182px">名称</div>
<div class="t d" style="left:784px;top:182px">数据类型</div>
<div class="t d" style="left:1064px;top:182px">初始值</div>
<div class="t d" style="left:1344px;top:182px">保持</div>
<div class="t d" style="left:1442px;top:182px">注释</div>
<div class="t bl" style="left:467px;top:224px">INPUT</div>
<div class="t d" style="left:385px;top:267px">1</div><div class="t g v" style="left:498px;top:265px">OFF_SQ</div><div class="t g v" style="left:783px;top:265px">BOOL</div><div class="t g v" style="left:1066px;top:265px">FALSE</div><div class="t lg" style="left:1440px;top:267px">OFF_SEQUENCE: 关闭初始步</div>
<div class="t d" style="left:385px;top:309px">2</div><div class="t g v" style="left:498px;top:307px">INIT_SQ</div><div class="t g v" style="left:783px;top:307px">BOOL</div><div class="t g v" style="left:1066px;top:307px">FALSE</div><div class="t lg" style="left:1440px;top:309px">INIT_SEQUENCE: 激活初始步</div>
<div class="t d" style="left:385px;top:351px">3</div><div class="t g v" style="left:498px;top:349px">ACK_EF</div><div class="t g v" style="left:783px;top:349px">BOOL</div><div class="t g v" style="left:1066px;top:349px">FALSE</div><div class="t lg" style="left:1440px;top:351px">ACKNOWLEDGE_ERROR_FAULT: 确认故障</div>
<!-- SFC texts -->
<div class="t m" style="left:490px;top:456px">STEP0</div><div class="t d" style="left:479px;top:493px">打开冰箱</div>
<div class="t m" style="left:490px;top:701px">STEP1</div><div class="t d" style="left:479px;top:737px">拿出可乐</div>
<div class="t m" style="left:490px;top:903px">STEP2</div><div class="t d" style="left:479px;top:939px">关闭冰箱</div>
<div class="t m" style="left:920px;top:701px">STEP3</div><div class="t d" style="left:920px;top:737px">拿雪碧</div>
<div class="t m" style="left:1235px;top:701px">STEP4</div><div class="t d" style="left:1234px;top:737px">拿牛奶</div>
<div class="t m" style="left:587px;top:574px">TRAN0</div>
<div class="t m" style="left:587px;top:814px">TRAN1</div>
<div class="t m" style="left:587px;top:1015px">TRAN2</div>
<!-- bottom -->
<div class="t g" style="left:382px;top:1344px">信息</div>
<div class="t bl" style="left:499px;top:1344px">属性</div>
<div class="t d" style="left:2775px;top:1344px">PU_1</div>
<div class="t bl" style="left:374px;top:1400px">PU_1</div>
<div class="t d" style="left:388px;top:1439px">常规</div>
<div class="t h" style="left:716px;top:1405px">PU_1</div>
<div class="t bl" style="left:716px;top:1463px">常规</div>
<div class="t d" style="left:716px;top:1521px">名称</div><div class="t d" style="left:891px;top:1521px">PU_1</div>
<div class="t d" style="left:716px;top:1570px">命名空间</div><div class="t d" style="left:891px;top:1570px">STD</div>
<div class="t d" style="left:716px;top:1619px">语言</div><div class="t d" style="left:891px;top:1619px">SFC</div>
<div class="t d" style="left:716px;top:1668px">类型</div><div class="t d" style="left:891px;top:1668px">FB</div>
<div class="t d" style="left:716px;top:1717px">注释</div>
<!-- right -->
<div class="t" style="left:3033px;top:95px;color:#222">资源</div>
<div class="t g" style="left:3051px;top:145px">搜索</div>
<div class="t h" style="left:3021px;top:195px">基础指令</div>
<div class="t bl" style="left:3087px;top:237px">SFC 指令</div>
<div class="t d" style="left:3101px;top:280px">顺控器结尾</div>
<div class="t d" style="left:3101px;top:322px">步和转换条件</div>
<div class="t d" style="left:3101px;top:364px">打开选择分支</div>
<div class="t d" style="left:3101px;top:406px">打开并行分支</div>
<div class="t d" style="left:3101px;top:448px">嵌套闭合</div>
<div class="t h" style="left:3021px;top:987px">系统库初级指令</div>
<div class="t d" style="left:3087px;top:1028px">SFC指令</div>
<div class="t d" style="left:3660px;top:1029px">V1.0</div>
<div class="t h" style="left:3021px;top:1767px">用户库</div>
<div class="t" style="left:3066px;top:1801px;font-weight:700;color:#444">无符合条件函数</div>
</body></html>
